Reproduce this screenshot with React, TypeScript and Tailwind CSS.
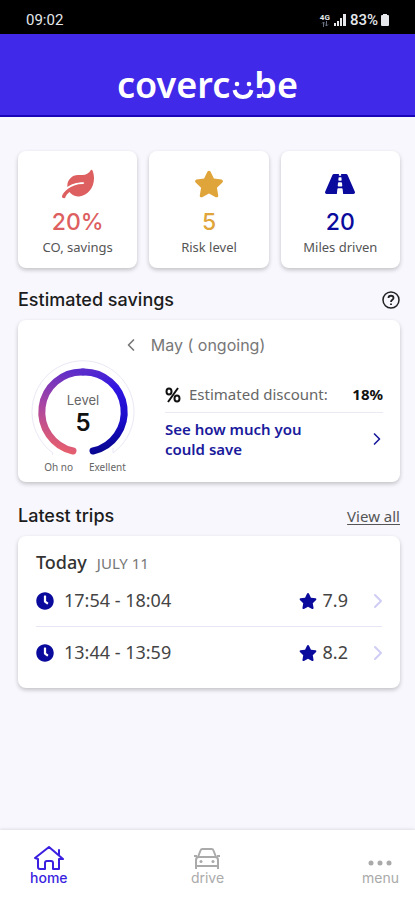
import React from 'react';
import { FaClock, FaLeaf, FaRoad, FaStar } from 'react-icons/fa';
import { FiChevronLeft, FiChevronRight } from 'react-icons/fi';

const trips = [
  { id: 1, time: '17:54 - 18:04', score: '7.9' },
  { id: 2, time: '13:44 - 13:59', score: '8.2' },
];

const StatusBar: React.FC = () => (
  <div className="flex h-[34px] items-center justify-between bg-black pt-1.5 pr-[25px] pl-[26px] font-['Roboto',sans-serif] text-[15px] leading-5 text-gray-200">
    <span>09:02</span>
    <div className="flex items-center gap-1">
      <div className="flex flex-col items-center">
        <span className="text-[8px] leading-[7px] font-bold">4G</span>
        <svg className="h-1.5 w-2 text-gray-500" viewBox="0 0 8 6" fill="none" stroke="currentColor">
          <path d="M2.5 6V1M1 2.5 2.5 1 4 2.5M5.5 0v5M4 3.5 5.5 5 7 3.5" />
        </svg>
      </div>
      <svg className="h-3 w-3" viewBox="0 0 12 12" fill="currentColor">
        <rect x="0" y="9" width="2" height="3" />
        <rect x="3" y="7" width="2" height="5" />
        <rect x="6" y="4" width="2" height="8" />
        <rect x="9" y="0" width="3" height="12" />
      </svg>
      <span className="font-medium">83%</span>
      <svg className="-ml-0.5 h-3 w-2.5" viewBox="0 0 10 12" fill="currentColor">
        <rect x="3" y="0" width="4" height="2" />
        <rect x="1" y="1" width="8" height="11" rx="1" />
      </svg>
    </div>
  </div>
);

const Header: React.FC = () => (
  <header className="flex h-[83px] items-center justify-center border-b-2 border-[#1a06b8] bg-[#4029e8] pt-5">
    <div className="flex items-center font-['Noto_Sans',sans-serif] text-[36px] leading-10 font-semibold text-white">
      <span>coverc</span>
      <svg className="mt-3.5 ml-0.5 h-6 w-6" viewBox="0 0 24 24" fill="none" stroke="currentColor" strokeWidth="4">
        <circle cx="5" cy="4" r="2.3" fill="currentColor" stroke="none" />
        <circle cx="17" cy="4" r="2.3" fill="currentColor" stroke="none" />
        <path d="M2.500 10c1 5 4.500 7 8.500 7s7.500-2 8.500-7" />
      </svg>
      <span className="relative -ml-0.5">
        b
        <span className="absolute bottom-[11px] left-0 h-1.5 w-2 bg-[#4029e8]" />
      </span>
      <span>e</span>
    </div>
  </header>
);

interface StatCardProps {
  icon: React.ReactNode;
  value: string;
  label: string;
  color: string;
}

const StatCard: React.FC<StatCardProps> = ({ icon, value, label, color }) => (
  <div className="flex h-[117px] flex-col items-center rounded-lg bg-white pt-[13px] shadow-[0_2px_4px_rgba(0,0,0,0.22)]">
    <div className={`flex h-10 items-center ${color}`}>{icon}</div>
    <p className={`font-['Inter',sans-serif] text-[23px] leading-9 font-medium ${color}`}>{value}</p>
    <p className="text-[13px] leading-3.5 text-[#555]">{label}</p>
  </div>
);

const LevelGauge: React.FC = () => (
  <div className="mt-[3px] flex w-[104px] flex-col items-center">
    <div className="relative">
      <svg className="h-[104px] w-[104px]" viewBox="0 0 104 104" fill="none">
        <defs>
          <linearGradient id="low" gradientUnits="userSpaceOnUse" x1="30" y1="92" x2="52" y2="12">
            <stop offset="0" stopColor="#e8606c" />
            <stop offset="0.5" stopColor="#a745a4" />
            <stop offset="1" stopColor="#5a2ccb" />
          </linearGradient>
          <linearGradient id="high" gradientUnits="userSpaceOnUse" x1="52" y1="12" x2="75" y2="92">
            <stop offset="0" stopColor="#5a2ccb" />
            <stop offset="0.3" stopColor="#3015e2" />
            <stop offset="0.7" stopColor="#1a0cc8" />
            <stop offset="1" stopColor="#06068c" />
          </linearGradient>
        </defs>
        <path d="M22 93A51 51 0 1 1 82 93l0-5M22 93l-1 2" stroke="#e9e8f6" />
        <path d="M42 91A40 40 0 0 1 52 12" stroke="url(#low)" strokeWidth="7" strokeLinecap="round" />
        <path d="M52 12A40 40 0 0 1 62 91" stroke="url(#high)" strokeWidth="7" strokeLinecap="round" />
      </svg>
      <div className="absolute inset-0 flex flex-col items-center pt-8 font-['Inter',sans-serif]">
        <span className="text-[13px] leading-4 text-[#666]">Level</span>
        <span className="text-[24px] leading-[30px] font-semibold text-[#111]">5</span>
      </div>
    </div>
    <div className="-mt-[5px] flex gap-4 pl-1 text-[10px] leading-4 whitespace-nowrap text-[#666]">
      <span>Oh no</span>
      <span>Exellent</span>
    </div>
  </div>
);

const HomeIcon: React.FC = () => (
  <svg className="h-6 w-[30px]" viewBox="0 0 30 24" fill="none" stroke="currentColor" strokeWidth="2" strokeLinejoin="round" strokeLinecap="round">
    <path d="M1 12 15 1l14 12M25 9V4M1 12l3 1v8q0 2 2 2h5v-6q0-2 2-2h4q2 0 2 2v6h6V13l4 0" />
  </svg>
);

const CarIcon: React.FC = () => (
  <svg className="h-6 w-[28px]" viewBox="0 0 28 24" fill="none" stroke="currentColor" strokeWidth="2" strokeLinejoin="round">
    <path d="M5 11 7.500 4.500Q8 3 9.500 3h9q1.500 0 2 1.500L23 11M3 20v-6q0-3 3-3h16q3 0 3 3v6zM3 19v4M25 19v4M1 10h3M24 10h3" />
    <circle cx="8" cy="15.500" r="1.500" fill="currentColor" stroke="none" />
    <circle cx="20" cy="15.500" r="1.500" fill="currentColor" stroke="none" />
  </svg>
);

const MenuIcon: React.FC = () => (
  <svg className="h-6 w-6" viewBox="0 0 24 24" fill="currentColor">
    <circle cx="3" cy="17" r="2.500" />
    <circle cx="12" cy="17" r="2.500" />
    <circle cx="21" cy="17" r="2.500" />
  </svg>
);

const App: React.FC = () => {
  return (
    <div className="flex min-h-screen flex-col bg-[#f7f7fd] font-['Noto_Sans',sans-serif]">
      <StatusBar />
      <Header />

      <main className="flex-1 pt-[34px] pr-[15px] pb-6 pl-[18px]">
        <div className="grid grid-cols-3 gap-3">
          <StatCard
            icon={<FaLeaf className="h-8 w-8" />}
            value="20%"
            label="CO, savings"
            color="text-[#dd5f5f]"
          />
          <StatCard
            icon={<FaStar className="h-[30px] w-[30px]" />}
            value="5"
            label="Risk level"
            color="text-[#e0a53a]"
          />
          <StatCard
            icon={<FaRoad className="h-[30px] w-[30px]" />}
            value="20"
            label="Miles driven"
            color="text-[#0a0a9c]"
          />
        </div>

        {/* Estimated savings */}
        <div className="mt-5 flex h-6 items-center justify-between">
          <h2 className="font-['Inter',sans-serif] text-[18px] leading-6 font-medium text-[#1c1c1c]">Estimated savings</h2>
          <button aria-label="Help" className="text-[#222]">
            <svg className="h-[18px] w-[18px]" viewBox="0 0 18 18" fill="none" stroke="currentColor" strokeWidth="1.500">
              <circle cx="9" cy="9" r="8" />
              <path d="M6.500 7c0-3 5-3 5 0 0 2-2.500 1.500-2.500 4M9 12.500V14" strokeWidth="1.800" />
            </svg>
          </button>
        </div>
        <section className="mt-2 h-[162px] rounded-lg bg-white pt-[13px] pr-[17px] pl-[13px] shadow-[0_2px_4px_rgba(0,0,0,0.22)]">
          <div className="flex h-6 items-center justify-center gap-2.5 pr-7 font-['Inter',sans-serif] text-[16px] text-[#777]">
            <button aria-label="Previous month">
              <FiChevronLeft className="h-5 w-5" />
            </button>
            <span>May ( ongoing)</span>
          </div>
          <div className="flex gap-[30px]">
            <LevelGauge />
            <div className="min-w-0 flex-1 pt-5">
              <div className="flex h-9 items-center border-b border-[#e9e9f3] text-[15px] whitespace-nowrap">
                <svg className="mr-2 h-4 w-4 text-[#111]" viewBox="0 0 16 16" fill="none" stroke="currentColor" strokeWidth="2">
                  <ellipse cx="4" cy="4.500" rx="2.500" ry="3" />
                  <ellipse cx="12" cy="11.500" rx="2.500" ry="3" />
                  <path d="M13 1 3 15" />
                </svg>
                <span className="text-[#666]">Estimated discount:</span>
                <span className="ml-auto font-bold text-[#111]">18%</span>
              </div>
              <a href="#save" className="mt-1.5 flex items-center justify-between text-[15px] leading-5 font-semibold text-[#1a1a9c]">
                <span>
                  See how much you
                  <br />
                  could save
                </span>
                <FiChevronRight className="-mr-1 h-5 w-5" />
              </a>
            </div>
          </div>
        </section>

        {/* Latest trips */}
        <div className="mt-[22px] flex h-6 items-center justify-between">
          <h2 className="font-['Inter',sans-serif] text-[18px] leading-6 font-medium text-[#1c1c1c]">Latest trips</h2>
          <a href="#trips" className="text-[15px] leading-6 text-[#555] underline underline-offset-2">
            View all
          </a>
        </div>
        <section className="mt-2 rounded-lg bg-white px-[18px] pt-[14px] pb-2.5 shadow-[0_2px_4px_rgba(0,0,0,0.22)]">
          <h3 className="flex items-baseline gap-2.5 leading-6">
            <span className="text-[18px] font-medium text-[#333]">Today</span>
            <span className="text-[15px] font-normal text-[#777]">JULY 11</span>
          </h3>
          <ul className="divide-y divide-[#e6e6f6]">
            {trips.map((trip) => (
              <li key={trip.id}>
                <a href="#trip" className="flex h-[51px] items-center text-[18px] text-[#444]">
                  <FaClock className="mr-2.5 h-[18px] w-[18px] text-[#0a0a9c]" />
                  <span>{trip.time}</span>
                  <FaStar className="mr-1.5 ml-auto h-4 w-[18px] text-[#0a0a9c]" />
                  <span>{trip.score}</span>
                  <FiChevronRight className="-mr-2 ml-[18px] h-6 w-6 text-[#cfcdf5]" />
                </a>
              </li>
            ))}
          </ul>
        </section>
      </main>

      <nav className="grid h-[70px] grid-cols-3 bg-white pt-4 font-['Inter',sans-serif] text-[14px] leading-4 text-[#aaa] shadow-[0_-1px_3px_rgba(0,0,0,0.1)]">
        <div className="flex pl-[30px]">
          <a href="#home" className="flex flex-col items-center font-medium text-[#3a1fe0]">
            <HomeIcon />
            home
          </a>
        </div>
        <div className="flex justify-center">
          <a href="#drive" className="flex flex-col items-center">
            <CarIcon />
            drive
          </a>
        </div>
        <div className="flex justify-end pr-4">
          <a href="#menu" className="flex flex-col items-center">
            <MenuIcon />
            menu
          </a>
        </div>
      </nav>
    </div>
  );
};

export default App;
